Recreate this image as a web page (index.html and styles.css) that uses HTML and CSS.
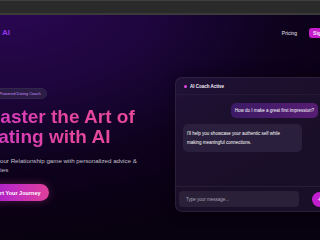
FILE: index.html
```html
<!DOCTYPE html>
<html lang="en">
<head>
<meta charset="utf-8">
<title>Dating Coach AI</title>
<link rel="stylesheet" href="styles.css">
</head>
<body>
<div class="topbar"></div>
<header class="nav">
  <div class="logo"><span class="logo-text">LoveCoach AI</span></div>
  <nav class="nav-links">
    <a class="nav-link" href="#">Pricing</a>
    <a class="nav-btn" href="#">Sign Up</a>
  </nav>
</header>
<main class="hero">
  <section class="hero-left">
    <div class="badge"><span class="badge-dot"></span>AI-Powered Dating Coach</div>
    <h1 class="title">Master the Art of<br>Dating with AI</h1>
    <p class="subtitle">Ace your Relationship game with personalized advice &amp;<br>activities</p>
    <a class="cta" href="#">Start Your Journey</a>
  </section>
  <section class="card">
    <div class="card-head"><span class="dot"></span>AI Coach Active</div>
    <div class="messages">
      <div class="msg user">How do I make a great first impression?</div>
      <div class="msg ai">I'll help you showcase your authentic self while<br>making meaningful connections.</div>
    </div>
    <div class="composer">
      <div class="input">Type your message...</div>
      <div class="send">+</div>
    </div>
  </section>
</main>
</body>
</html>
```

FILE: styles.css
```css
* { box-sizing: border-box; }
html, body { margin: 0; padding: 0; }
body {
  width: 320px;
  height: 240px;
  overflow: hidden;
  font-family: "Liberation Sans", Arial, sans-serif;
  color: #fff;
  background: radial-gradient(130% 100% at 0% 0%, #2b0754 0%, #1f063f 35%, #0e021e 68%, #08010f 100%);
}
a { text-decoration: none; color: inherit; }

.topbar {
  height: 15px;
  background: #2a2a2a;
  border-top: 1px solid #3e3e3e;
  border-bottom: 2px solid #3a3a3a;
}

.nav {
  height: 36px;
  display: flex;
  align-items: center;
  margin-right: -16px;
}
.logo {
  width: 70px;
  margin-left: -60px;
  display: flex;
  justify-content: flex-end;
}
.logo-text {
  font-size: 8px;
  font-weight: 700;
  line-height: 10px;
  color: #9333ea;
  white-space: nowrap;
}
.nav-links {
  margin-left: auto;
  display: flex;
  align-items: center;
  gap: 12px;
}
.nav-link {
  font-size: 5px;
  color: #e8e6ee;
}
.nav-btn {
  font-size: 5px;
  font-weight: 700;
  color: #fbe6ff;
  background: #c51bc9;
  border-radius: 3px;
  padding: 3px 4px;
  line-height: 4px;
  height: 10px;
  display: flex;
  align-items: center;
}

.hero {
  display: flex;
  align-items: flex-start;
  margin-left: -15.5px;
  padding-top: 26px;
}
.hero-left {
  flex: 0 0 190.5px;
  padding-top: 11px;
  display: flex;
  flex-direction: column;
  align-items: flex-start;
}
.badge {
  display: flex;
  align-items: center;
  height: 11px;
  padding: 0 5px 0 4px;
  border-radius: 6px;
  background: #2a1c44;
  border: 1px solid #33264d;
  color: #c98cff;
  font-size: 4px;
  white-space: nowrap;
}
.badge-dot {
  width: 3px;
  height: 3px;
  border-radius: 50%;
  background: #d946ef;
  margin-right: 2px;
}
.title {
  margin: 8px 0 0;
  font-size: 19px;
  line-height: 20px;
  font-weight: 700;
  white-space: nowrap;
  color: #e040a8;
  background: linear-gradient(90deg, #d63bc6 0%, #e2459f 50%, #ea4a9a 100%);
  -webkit-background-clip: text;
  background-clip: text;
  -webkit-text-fill-color: transparent;
}
.subtitle {
  margin: 9px 0 0;
  font-size: 6.2px;
  line-height: 9px;
  color: #c4c0cc;
  white-space: nowrap;
}
.cta {
  display: flex;
  align-items: center;
  margin-top: 10px;
  height: 17px;
  padding: 0 8px 0 7px;
  border-radius: 9px;
  font-size: 5.5px;
  font-weight: 700;
  color: #fff;
  background: linear-gradient(90deg, #9d1cc8 0%, #c22cc0 45%, #e0409a 100%);
  box-shadow: 0 0 8px rgba(224, 64, 170, 0.35);
  white-space: nowrap;
}

.card {
  flex: 0 0 158px;
  height: 135px;
  display: flex;
  flex-direction: column;
  border-radius: 7px;
  background: rgba(44, 30, 66, 0.5);
  border: 1px solid rgba(255, 255, 255, 0.07);
  box-shadow: 0 0 14px rgba(0, 0, 0, 0.4);
}
.card-head {
  height: 17px;
  display: flex;
  align-items: center;
  padding-left: 8px;
  font-size: 4.5px;
  font-weight: 700;
  color: #f2eef8;
  border-bottom: 1px solid rgba(255, 255, 255, 0.04);
}
.dot {
  width: 3px;
  height: 3px;
  border-radius: 50%;
  background: #e04ae0;
  margin-right: 3px;
}
.messages {
  flex: 1;
  display: flex;
  flex-direction: column;
  gap: 6px;
  padding: 8px 14px 0 7px;
}
.msg {
  font-size: 4.5px;
  line-height: 9px;
  color: #fff;
  border-radius: 5px;
  white-space: nowrap;
}
.user {
  align-self: flex-end;
  padding: 3px 4px;
  background: linear-gradient(90deg, #3c1a66 0%, #561d72 100%);
}
.ai {
  align-self: flex-start;
  padding: 5px 4px;
  width: 119px;
  background: #2a1f3c;
}
.composer {
  height: 25px;
  display: flex;
  align-items: center;
  gap: 13px;
  padding: 0 3px;
  border-top: 1px solid rgba(255, 255, 255, 0.06);
}
.input {
  width: 120px;
  height: 16px;
  display: flex;
  align-items: center;
  padding-left: 7px;
  border-radius: 4px;
  background: #2a2138;
  font-size: 4.5px;
  color: #a9a2b6;
}
.send {
  width: 15px;
  height: 15px;
  border-radius: 50%;
  background: #c21ed0;
  display: flex;
  align-items: center;
  justify-content: center;
  font-size: 7px;
  color: #f6d8ff;
}
```
